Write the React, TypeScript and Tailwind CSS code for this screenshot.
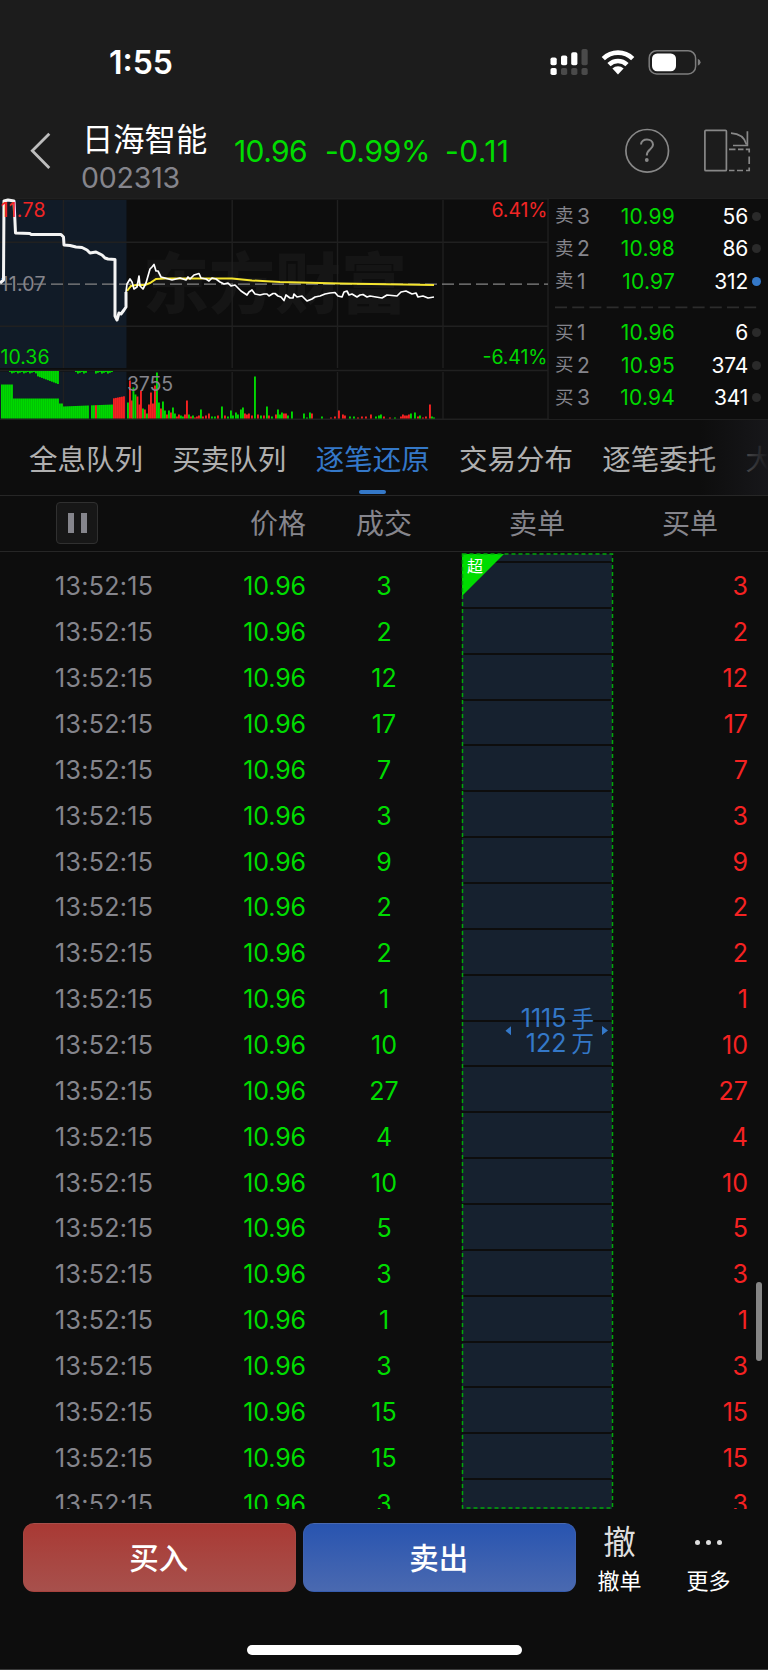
import React from 'react';

interface Tick {
  time: string;
  price: string;
  volume: number;
}

interface Quote {
  side: string;
  level: number;
  price: string;
  volume: number;
  active?: boolean;
}

const volumes = [3, 2, 12, 17, 7, 3, 9, 2, 2, 1, 10, 27, 4, 10, 5, 3, 1, 3, 15, 15, 3];

const ticks: Tick[] = volumes.map(volume => ({ time: '13:52:15', price: '10.96', volume }));

const asks: Quote[] = [
  { side: '卖', level: 3, price: '10.99', volume: 56 },
  { side: '卖', level: 2, price: '10.98', volume: 86 },
  { side: '卖', level: 1, price: '10.97', volume: 312, active: true },
];

const bids: Quote[] = [
  { side: '买', level: 1, price: '10.96', volume: 6 },
  { side: '买', level: 2, price: '10.95', volume: 374 },
  { side: '买', level: 3, price: '10.94', volume: 341 },
];

const tabs = ['全息队列', '买卖队列', '逐笔还原', '交易分布', '逐笔委托', '大单'];

// Call auction section, drawn thicker than the continuous session
const auctionLine =
  '0,283 3.5,280 4,201 8,200 14,201 15.5,233 30,233.5 31,234.5 61,234.5 63.5,237 64,245 70,245.5 76,247 82,247.5 87,250 90,253 96,252 102,255 105,258 108,259 115,259.5 115,316 117,320 119,313 121,314 124,310 126,307 126,292';

const priceLine =
  '126,292 127,284 130,279 132,282 134,289 137,287 139,276 140,286 143,289 146,283 150,269 152,267 154,264.5 156,271 158,271 161,277 165,278 172,280 180,278 186,280 188,277 190,279 194,275 199,273.5 201,278 206,279 209,281 212,278 216,279 220,282 224,284 228,283 231,286 235,285 238,288 241,291 244,293 247,295 249,292 252,290 255,294 260,295 264,294 267,294 269,296 273,293.5 275,293.5 278,296 281,297 284,300.5 286,295 290,298 293,298 294,294 297,297 302,296 307,301 312,299 315,297 320,296 325,294 330,293 335,292.5 338,296 342,297 344,292 347,291 349,295 352,294 357,297 360,295 363,294.5 367,297 370,296 376,297 382,298 387,295 397,296 401,292 406,291 412,294 416,293 418,297 423,296 428,298 434,297';

const averageLine =
  '127,291 131,286 136,285 145,285 150,283 156,279 165,278.5 232,278.5 252,280.5 280,282 340,283.5 434,285';

// [x, height, up]
const sessionBars: [number, number, number][] = [
  [127, 16, 0], [129, 38, 1], [131, 18, 1], [132.5, 31, 0], [134.5, 24, 0], [136.5, 22, 1], [138.5, 14, 1],
  [140, 28, 1], [142, 10, 0], [144, 9, 1], [146, 5, 0], [148, 14, 1], [150, 26, 1], [152, 15, 1], [154, 33, 1],
  [156, 46, 0], [158, 16, 0], [160, 10, 1], [162, 17, 0], [164, 8, 0], [166, 4, 1], [168, 8, 0], [170, 6, 1],
  [172, 11, 0], [174, 5, 0], [176, 2, 1], [178, 4, 1], [180, 3, 0], [182, 2, 0], [184, 4, 1], [186, 18, 1],
  [188, 4, 0], [190, 2, 1], [192, 3, 0], [194, 1, 1], [196, 2, 1], [198, 3, 1], [200, 9, 0], [202, 2, 1],
  [205, 3, 1], [208, 5, 1], [211, 2, 0], [214, 2, 0], [217, 3, 1], [221, 12, 0], [224, 3, 1], [227, 2, 0],
  [230, 8, 0], [232, 3, 0], [235, 6, 0], [237, 4, 0], [240, 9, 0], [242, 11, 0], [244, 5, 1], [246, 4, 1],
  [248, 5, 1], [251, 3, 1], [254, 42, 0], [257, 4, 1], [260, 3, 0], [263, 3, 1], [266, 12, 0], [268, 3, 1],
  [271, 2, 0], [275, 4, 1], [277, 9, 0], [279, 4, 0], [281, 6, 0], [283, 5, 1], [285, 5, 1], [287, 3, 0],
  [291, 7, 0], [303, 5, 0], [306, 1, 0], [309, 6, 0], [311, 5, 1], [321, 2, 0], [330, 1, 1], [334, 2, 1],
  [338, 8, 1], [342, 4, 1], [344, 3, 1], [349, 2, 0], [353, 2, 0], [357, 1, 1], [361, 2, 1], [365, 2, 1],
  [370, 4, 1], [375, 2, 0], [378, 3, 0], [380, 4, 0], [383, 2, 1], [389, 1, 1], [394, 1, 0], [400, 2, 1],
  [402, 4, 1], [404, 3, 1], [406, 3, 1], [408, 4, 1], [410, 5, 0], [414, 6, 0], [417, 2, 1], [419, 3, 0],
  [422, 1, 1], [425, 2, 1], [429, 14, 1], [431, 2, 0], [433, 1, 0],
];

function auctionBars() {
  const bars: { x: number; y: number; h: number; up: boolean }[] = [];
  for (let x = 1; x < 125; x += 2) {
    if (x === 89) continue;
    let h = 12 + (x - 62) * 0.04;
    if (x < 12) h = 34;
    else if (x < 59) h = 20;
    else if (x < 62) h = 15;
    else if (x >= 112) h = 20 + (x - 112) * 0.2;
    bars.push({ x, y: 418.5 - h, h, up: x >= 112 || x === 95 });
  }
  for (let x = 9; x < 59; x += 2) {
    const h = x < 36 ? 1 + (x % 3) * 0.7 : 5 + (x - 36) * 0.38;
    bars.push({ x, y: 371, h, up: false });
  }
  for (let x = 75; x < 112; x += 2) {
    if (x > 86 && x < 95) continue;
    bars.push({ x, y: 371, h: 1 + (x % 3) * 0.8, up: false });
  }
  return bars;
}

function StatusBar() {
  return (
    <div className="flex h-[110px] items-start justify-between pl-[109px] pr-[67px] pt-[42px] text-white">
      <span className="text-[32px] font-semibold leading-[41px]">1:55</span>
      <svg className="mt-[7px] h-[26px] w-[151px]" viewBox="550 49 151 26">
        <g fill="#fff">
          <rect x="550.5" y="57.5" width="6.2" height="7.8" rx="1.8" />
          <rect x="561" y="55.5" width="6.2" height="9.8" rx="1.8" />
          <rect x="571.2" y="52.2" width="6.2" height="13.1" rx="1.8" />
          <rect x="550.5" y="68" width="6.2" height="7" rx="1.8" />
        </g>
        <g fill="#4a4a4a">
          <rect x="581.5" y="49" width="6.2" height="16.3" rx="1.8" />
          <rect x="561" y="68" width="6.2" height="7" rx="1.8" />
          <rect x="571.2" y="68" width="6.2" height="7" rx="1.8" />
          <rect x="581.5" y="68" width="6.2" height="7" rx="1.8" />
        </g>
        <g fill="none" stroke="#fff" strokeWidth="4.6">
          <path d="M603.3 58.6 A21 21 0 0 1 632.7 58.6" />
          <path d="M609 64.6 A13 13 0 0 1 627 64.6" />
        </g>
        <path d="M612.4 68.6 A8 8 0 0 1 623.6 68.6 L618 74.4 Z" fill="#fff" />
        <rect x="649.2" y="50.7" width="46.4" height="23.2" rx="7.5" fill="none" stroke="#7d7d7d" strokeWidth="1.5" />
        <rect x="652" y="53.4" width="24" height="17.8" rx="5.2" fill="#fff" />
        <path d="M697.8 58.8 Q700.6 60.2 700.6 62.3 Q700.6 64.4 697.8 65.8 Z" fill="#7d7d7d" />
      </svg>
    </div>
  );
}

function TitleBar() {
  return (
    <div className="flex h-[88px] items-start">
      <svg className="ml-[28px] mt-[21px] h-[40px] w-[26px] shrink-0" viewBox="28 131 26 40">
        <path d="M49.3 133.7 L32.3 150.8 L49.3 168" fill="none" stroke="#bdbdbd" strokeWidth="2.8" />
      </svg>
      <div className="ml-[27px] w-[153px] pt-[10px]">
        <div className="pl-px text-[31.3px] leading-[40px] text-white">日海智能</div>
        <div className="-mt-[1px] text-[28.5px] leading-[38px] tracking-[-0.2px] text-[#85858c]">002313</div>
      </div>
      <div className="flex w-[391px] pt-[21px] text-[30px] leading-[40px] text-[#00dc00]">
        <span className="w-[91px] tracking-[-0.6px]">10.96</span>
        <span className="w-[120px] tracking-[-0.3px]">-0.99%</span>
        <span className="tracking-[0.4px]">-0.11</span>
      </div>
      <svg className="mt-[17px] h-[46px] w-[126px]" viewBox="625 127 126 46" fill="none" stroke="#888" strokeWidth="1.7">
        <circle cx="647.2" cy="150.8" r="21.3" />
        <path d="M641 144.6 C641 137.8 653 137.8 653 144.8 C653 149.4 646.8 149.4 646.8 155.4" strokeWidth="2" />
        <circle cx="646.8" cy="160" r="1.9" fill="#888" stroke="none" />
        <rect x="704.9" y="130.3" width="21.5" height="40.4" rx="1" />
        <path d="M731 133.2 C739 133.6 744.6 137.6 746.5 144.5" />
        <path d="M747.4 131.3 V145.5 H733" />
        <path d="M729 149.4 H735.5 M738 149.4 H743.5 M745.8 149.4 H749.2 V152.5 M749.2 156.5 V164 M749.2 167.4 V170.5 H746 M729 170.5 H734.5 M737 170.5 H743" />
      </svg>
    </div>
  );
}

function MiniChart() {
  return (
    <svg className="h-[222px] w-[549px] shrink-0" viewBox="0 198 549 222" fontFamily="Inter, sans-serif" fontSize="19.5">
      <rect x="0" y="200" width="126.5" height="168" fill="#111b27" />
      <rect x="0" y="371.5" width="126.5" height="47" fill="#111b27" />
      <text x="143" y="308" fontSize="66" fontWeight="900" fill="#151515" fontFamily="'Noto Sans CJK SC', sans-serif" textLength="264">
        东方财富
      </text>
      <g stroke="#202020" strokeWidth="1.4">
        <path d="M0 198.7 H549 M0 242.3 H548 M0 326.3 H548 M0 370.5 H548 M0 419.3 H549" />
        <path d="M63.4 200 V368 M232.2 200 V368 M337.5 200 V368 M443 200 V368 M63.4 372 V419 M232.2 372 V419 M337.5 372 V419 M443 372 V419 M548 199 V419" />
      </g>
      <text x="0.5" y="290.5" fill="#85858c" textLength="45">11.07</text>
      <path d="M0 284.2 H548" stroke="#858585" strokeWidth="1.2" strokeDasharray="12 5" />
      {auctionBars().map((bar, i) => (
        <rect key={i} x={bar.x} y={bar.y} width="1.9" height={bar.h} fill={bar.up ? '#f52222' : '#00d800'} />
      ))}
      {sessionBars.map(([x, h, up]) => (
        <rect key={x} x={x} y={418.5 - h} width="1.9" height={h} fill={up ? '#f52222' : '#00d800'} />
      ))}
      <polyline points={averageLine} fill="none" stroke="#f5e52f" strokeWidth="2" />
      <polyline points={priceLine} fill="none" stroke="#fff" strokeWidth="1.7" strokeLinejoin="round" />
      <polyline points={auctionLine} fill="none" stroke="#f4f4f4" strokeWidth="3" strokeLinejoin="round" />
      <text x="0.5" y="217.3" fill="#f02525" textLength="45">11.78</text>
      <text x="0.5" y="363.5" fill="#00d800" textLength="49">10.36</text>
      <text x="491.5" y="217.3" fill="#f02525" textLength="56">6.41%</text>
      <text x="482.5" y="363.5" fill="#00d800" textLength="65">-6.41%</text>
      <text x="127" y="391" fill="#85858c" textLength="46">3755</text>
    </svg>
  );
}

function QuoteRow({ quote }: { quote: Quote }) {
  return (
    <div className="flex h-[32.5px] items-center text-[21px]">
      <span className="w-[22px] text-[18.5px] text-[#85858c]">{quote.side}</span>
      <span className="w-[20px] text-[#85858c]">{quote.level}</span>
      <span className="w-[78px] text-right tracking-[0.2px] text-[#00d800]">{quote.price}</span>
      <span className="w-[73px] text-right tracking-[-0.2px] text-white">{quote.volume}</span>
      <span className={`ml-[4px] h-[9px] w-[9px] rounded-full ${quote.active ? 'bg-[#3478c8]' : 'bg-[#2a2a2a]'}`} />
    </div>
  );
}

function OrderBook() {
  return (
    <div className="h-[222px] flex-1 border-y border-[#202020] pl-[6px] pt-[1px]">
      {asks.map(quote => (
        <QuoteRow key={quote.level} quote={quote} />
      ))}
      <svg className="block h-[19px] w-[203px]" viewBox="0 0 203 19">
        <path d="M0 9.4 H203" stroke="#2c2c2c" strokeWidth="1.6" strokeDasharray="12 5.2" />
      </svg>
      {bids.map(quote => (
        <QuoteRow key={quote.level} quote={quote} />
      ))}
    </div>
  );
}

function Tabs() {
  return (
    <div className="relative flex h-[76px] gap-[29.3px] overflow-hidden border-b border-[#262626] pl-[29px] text-[28.5px] text-[#b0b0b0]">
      {tabs.map(tab => (
        <div
          key={tab}
          className={`flex shrink-0 flex-col items-center whitespace-nowrap pt-[20px] leading-[40px] ${tab === '逐笔还原' ? 'text-[#3478c8]' : ''}`}
        >
          {tab}
          {tab === '逐笔还原' && <span className="mt-[10px] h-[4px] w-[27px] rounded-full bg-[#3478c8]" />}
        </div>
      ))}
      <div className="absolute right-0 top-0 h-full w-[68px] bg-gradient-to-r from-[#17171a]/0 to-[#17171a]" />
    </div>
  );
}

function TableHead() {
  return (
    <div className="flex h-[56px] items-center border-b border-[#262626] pl-[56px] text-[28px] text-[#85858c]">
      <button className="-mt-[2px] flex h-[42px] w-[42px] items-center justify-center gap-[7px] rounded-[4px] border border-[#303030] bg-[#171717]">
        <span className="h-[20px] w-[6px] bg-[#85858c]" />
        <span className="h-[20px] w-[6px] bg-[#85858c]" />
      </button>
      <span className="ml-[152px] w-[106px]">价格</span>
      <span className="w-[153px]">成交</span>
      <span className="w-[153px]">卖单</span>
      <span>买单</span>
    </div>
  );
}

function TickRow({ tick }: { tick: Tick }) {
  return (
    <div className="flex h-[45.87px] shrink-0 items-center text-[25px] leading-[30px]">
      <span className="w-[188px] pl-[55px] pt-[5px] tracking-[0.3px] text-[#85858c]">{tick.time}</span>
      <span className="w-[118px] pt-[5px] text-right tracking-[-0.1px] text-[#00dc00]">{tick.price}</span>
      <span className="w-[156px] pt-[5px] text-center text-[#00dc00]">{tick.volume}</span>
      <span className="h-full w-[150px] border-t-2 border-[#0d0d0d] bg-[#16212f]" />
      <span className="w-[136px] pt-[5px] text-right text-[#f52222]">{tick.volume}</span>
    </div>
  );
}

function TickList() {
  return (
    <div className="relative flex h-[957px] flex-col overflow-hidden">
      <div className="ml-[462px] mt-[2px] h-[7px] w-[150px] shrink-0 bg-[#16212f]" />
      {ticks.map((tick, i) => (
        <TickRow key={i} tick={tick} />
      ))}

      {/* Merged sell order */}
      <svg className="absolute left-[461px] top-0 h-[957px] w-[153px]" viewBox="0 0 153 957">
        <path d="M1 2 H43 L1 44 Z" fill="#00dc00" />
        <rect x="1.5" y="2" width="150" height="954" fill="none" stroke="#00a808" strokeWidth="1.5" strokeDasharray="4 3" />
        <path d="M50 474.3 V483.3 L44.5 478.8 Z M141 474 V483 L147 478.5 Z" fill="#3478c8" />
      </svg>
      <span className="absolute left-[467px] top-[4px] text-[16px] leading-[20px] text-white">超</span>
      <div className="absolute right-[174px] top-[454px] text-right text-[25px] leading-[25px] text-[#3478c8]">
        <div>1115 <span className="-ml-[2px] text-[22.5px]">手</span></div>
        <div>122 <span className="-ml-[2px] text-[22.5px]">万</span></div>
      </div>

      <div className="absolute left-[756px] top-[730px] h-[79px] w-[6px] rounded-full bg-[#858585]" />
    </div>
  );
}

function ActionBar() {
  return (
    <div className="flex h-[136px] pl-[23px] pt-[14px] text-white">
      <button className="h-[69px] w-[272.5px] rounded-[11px] border border-[#a8514c]/40 bg-gradient-to-b from-[#a93934] to-[#a7504c] pr-[1px] pt-[1px] text-[29.5px] font-medium">
        买入
      </button>
      <button className="ml-[7.5px] h-[69px] w-[272.5px] rounded-[11px] border border-[#4a69b0]/40 bg-gradient-to-b from-[#2854b0] to-[#4a69b0] pr-[1px] pt-[1px] text-[29.5px] font-medium">
        卖出
      </button>
      <div className="ml-[21px] flex w-[46px] flex-col items-center">
        <span className="text-[32.5px] leading-[39px] text-[#dedede]">撤</span>
        <span className="whitespace-nowrap text-[22px] leading-[38px]">撤单</span>
      </div>
      <div className="ml-[43px] flex w-[46px] flex-col items-center">
        <span className="flex h-[39px] items-center gap-[5.5px]">
          <span className="h-[5.5px] w-[5.5px] rounded-full bg-[#dedede]" />
          <span className="h-[5.5px] w-[5.5px] rounded-full bg-[#dedede]" />
          <span className="h-[5.5px] w-[5.5px] rounded-full bg-[#dedede]" />
        </span>
        <span className="whitespace-nowrap text-[22px] leading-[38px]">更多</span>
      </div>
    </div>
  );
}

export default function App() {
  return (
    <div className="flex h-[1670px] w-[768px] flex-col overflow-hidden border-b border-[#3a3a3a] bg-[#0d0d0d] font-[Inter,'Noto_Sans_CJK_SC',sans-serif]">
      <header className="bg-[#1c1c1c]">
        <StatusBar />
        <TitleBar />
      </header>
      <div className="flex">
        <MiniChart />
        <OrderBook />
      </div>
      <Tabs />
      <TableHead />
      <TickList />
      <ActionBar />
      <div className="mx-auto h-[10px] w-[275px] rounded-full bg-white" />
    </div>
  );
}
